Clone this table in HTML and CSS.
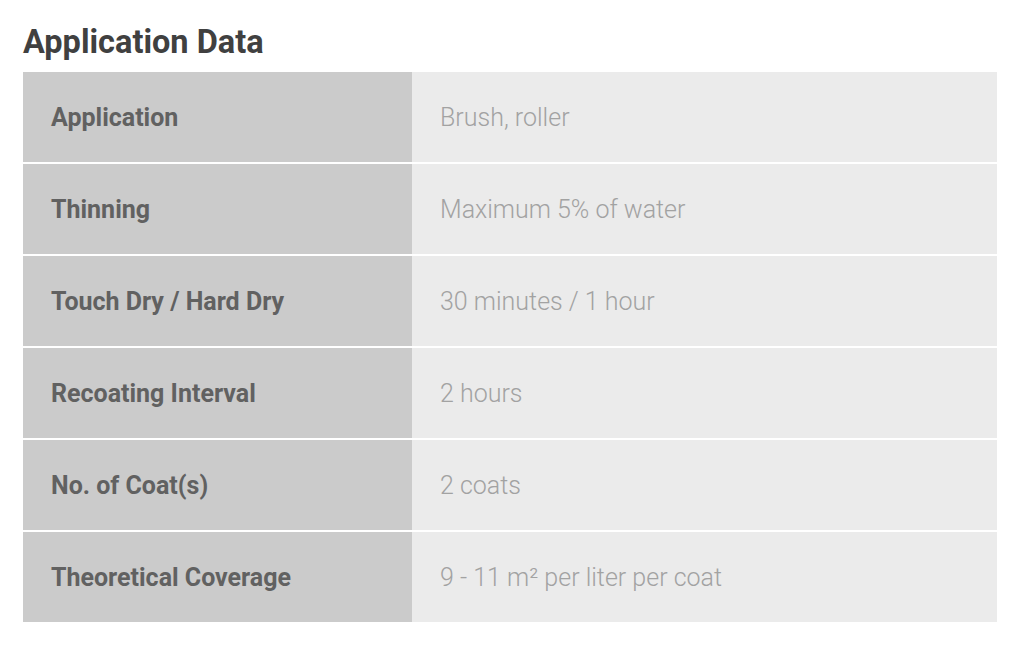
FILE: index.html
```html
<!DOCTYPE html>
<html>
<head>
<meta charset="utf-8">
<link rel="stylesheet" href="styles.css">
</head>
<body>
<div class="page">
  <h2 class="title">Application Data</h2>
  <div class="table">
    <div class="row"><div class="label">Application</div><div class="value">Brush, roller</div></div>
    <div class="row"><div class="label">Thinning</div><div class="value">Maximum 5% of water</div></div>
    <div class="row"><div class="label">Touch Dry / Hard Dry</div><div class="value">30 minutes / 1 hour</div></div>
    <div class="row"><div class="label">Recoating Interval</div><div class="value">2 hours</div></div>
    <div class="row"><div class="label">No. of Coat(s)</div><div class="value">2 coats</div></div>
    <div class="row"><div class="label">Theoretical Coverage</div><div class="value">9 - 11 m² per liter per coat</div></div>
  </div>
</div>
</body>
</html>
```

FILE: styles.css
```css
html, body {
  margin: 0;
  padding: 0;
  background: #ffffff;
}
.page {
  padding: 23px 27px 0 23px;
  font-family: Roboto, "Liberation Sans", sans-serif;
}
.title {
  margin: 0 0 11px 0;
  font-size: 32.5px;
  font-weight: 700;
  color: #404040;
  line-height: 38px;
  letter-spacing: 0;
}
.table {
  display: flex;
  flex-direction: column;
  gap: 2px;
  width: 974px;
}
.row {
  display: grid;
  grid-template-columns: 389px 1fr;
  height: 90px;
}
.label, .value {
  display: flex;
  align-items: center;
  padding-left: 28px;
  font-size: 25px;
}
.label {
  background: #cbcbcb;
  color: #616161;
  font-weight: 700;
}
.value {
  background: #ebebeb;
  color: #a2a2a2;
  font-weight: 300;
}
```
